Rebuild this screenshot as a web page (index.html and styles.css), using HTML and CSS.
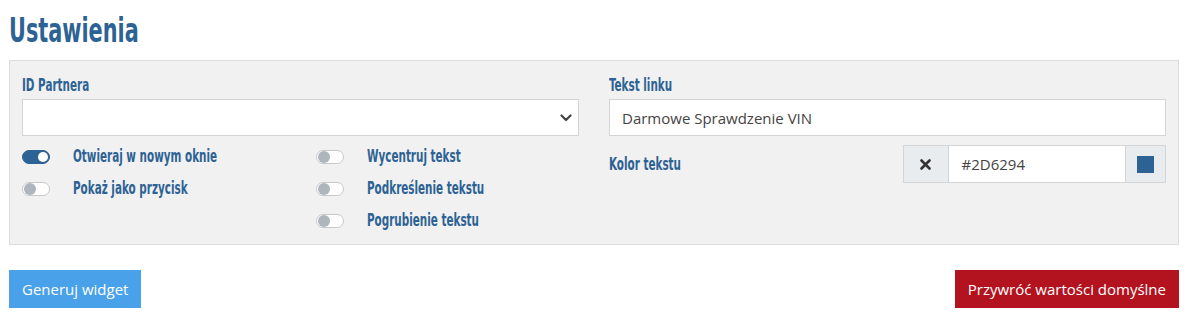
FILE: index.html
```html
<!DOCTYPE html>
<html lang="pl">
<head>
    <meta charset="UTF-8">
    <meta name="viewport" content="width=device-width, initial-scale=1.0">
    <title>Ustawienia widgetu</title>
    <link rel="stylesheet" href="styles.css">
</head>
<body>

<div class="page">
    <h1 class="title"><span class="narrow">Ustawienia</span></h1>

    <!-- Panel ustawien -->
    <div class="panel">
        <div class="col">
            <label class="label"><span class="narrow">ID Partnera</span></label>
            <div class="select">
                <svg class="chevron" width="12" height="8" viewBox="0 0 12 8">
                    <path d="M1.5 1.5 L6 6 L10.5 1.5" fill="none" stroke="#444" stroke-width="2.2" stroke-linecap="round" stroke-linejoin="round"/>
                </svg>
            </div>

            <div class="switches">
                <div class="switch-col">
                    <div class="switch-row">
                        <span class="switch on"></span>
                        <span class="switch-label narrow">Otwieraj w nowym oknie</span>
                    </div>
                    <div class="switch-row">
                        <span class="switch"></span>
                        <span class="switch-label narrow">Pokaż jako przycisk</span>
                    </div>
                </div>
                <div class="switch-col">
                    <div class="switch-row">
                        <span class="switch"></span>
                        <span class="switch-label narrow">Wycentruj tekst</span>
                    </div>
                    <div class="switch-row">
                        <span class="switch"></span>
                        <span class="switch-label narrow">Podkreślenie tekstu</span>
                    </div>
                    <div class="switch-row">
                        <span class="switch"></span>
                        <span class="switch-label narrow">Pogrubienie tekstu</span>
                    </div>
                </div>
            </div>
        </div>

        <div class="col">
            <label class="label"><span class="narrow">Tekst linku</span></label>
            <div class="input">Darmowe Sprawdzenie VIN</div>

            <div class="color-row">
                <span class="label"><span class="narrow">Kolor tekstu</span></span>
                <div class="color-group">
                    <span class="addon">
                        <svg width="11" height="11" viewBox="0 0 11 11">
                            <path d="M1.5 1.5 L9.5 9.5 M9.5 1.5 L1.5 9.5" stroke="#333" stroke-width="2.6" stroke-linecap="round"/>
                        </svg>
                    </span>
                    <span class="color-value">#2D6294</span>
                    <span class="addon swatch-addon"><span class="swatch"></span></span>
                </div>
            </div>
        </div>
    </div>

    <div class="actions">
        <button class="btn btn-blue">Generuj widget</button>
        <button class="btn btn-red">Przywróć wartości domyślne</button>
    </div>
</div>

</body>
</html>
```

FILE: styles.css
```css
/* Basic reset */
body {
    margin: 0;
    padding: 0;
    background-color: #ffffff;
    font-family: "Open Sans", Arial, sans-serif;
    color: #333;
}

.page {
    width: 1170px;
    margin-left: 9px;
}

/* Headings use a narrow bold face */
.title,
.label,
.switch-label {
    font-family: "DejaVu Sans Condensed", "Liberation Sans", Arial, sans-serif;
    font-weight: bold;
    color: #2d6294;
}

/* squeeze the condensed face a bit more */
.narrow {
    display: inline-block;
    white-space: nowrap;
    transform: scaleX(0.68);
    transform-origin: left center;
}

.title {
    font-size: 34px;
    line-height: 36px;
    margin: 12px 0 12px 0;
}

/* Settings panel */
.panel {
    background-color: #f1f1f1;
    border: 1px solid #dcdcdc;
    padding: 14px 12px 7px 12px;
    display: grid;
    grid-template-columns: 1fr 1fr;
    gap: 30px;
}

.col {
    display: flex;
    flex-direction: column;
}

.label {
    display: block;
    font-size: 17px;
    line-height: 20px;
    margin-bottom: 4px;
}

.select,
.input {
    height: 35px;
    background-color: #ffffff;
    border: 1px solid #d4d4d4;
    box-sizing: content-box;
}

.select {
    display: flex;
    align-items: center;
    justify-content: flex-end;
    padding-right: 5px;
}

.chevron {
    margin-right: 1px;
}

.input {
    display: flex;
    align-items: center;
    padding-left: 12px;
    font-size: 15px;
    color: #444;
}

/* Switches */
.switches {
    display: grid;
    grid-template-columns: 1fr 1fr;
    gap: 30px;
    margin-top: 5px;
}

.switch-row {
    height: 32px;
    display: flex;
    align-items: center;
}

.switch {
    position: relative;
    width: 26px;
    height: 12px;
    border: 1px solid #c8c8c8;
    border-radius: 8px;
    background-color: #ffffff;
    margin-right: 23px;
    flex-shrink: 0;
}

.switch::after {
    content: "";
    position: absolute;
    left: 1px;
    top: 0;
    width: 12px;
    height: 12px;
    border-radius: 50%;
    background-color: #adb5bd;
}

.switch.on {
    background-color: #2d6294;
    border-color: #2d6294;
}

.switch.on::after {
    left: auto;
    right: 1px;
    top: 1px;
    width: 10px;
    height: 10px;
    background-color: #ffffff;
}

.switch-label {
    font-size: 17px;
    line-height: 20px;
    margin-top: -3px;
}

/* Color picker */
.color-row {
    display: grid;
    grid-template-columns: 1fr 1fr;
    gap: 30px;
    align-items: center;
    margin-top: 9px;
}

.color-row .label {
    margin-bottom: 0;
}

.color-group {
    display: flex;
    height: 38px;
}

.addon {
    width: 46px;
    display: flex;
    align-items: center;
    justify-content: center;
    background-color: #e9ecef;
    border: 1px solid #d4d4d4;
    box-sizing: border-box;
}

.swatch-addon {
    width: 41px;
}

.swatch {
    width: 17px;
    height: 17px;
    background-color: #2d6294;
}

.color-value {
    flex: 1;
    display: flex;
    align-items: center;
    padding-left: 13px;
    background-color: #ffffff;
    border-top: 1px solid #d4d4d4;
    border-bottom: 1px solid #d4d4d4;
    font-size: 15px;
    color: #444;
}

/* Buttons */
.actions {
    display: flex;
    justify-content: space-between;
    margin-top: 25px;
}

.btn {
    font-family: "Open Sans", Arial, sans-serif;
    font-size: 15px;
    height: 38px;
    padding: 0 13px;
    border: none;
    color: #ffffff;
}

.btn-blue {
    background-color: #48a1e9;
}

.btn-red {
    background-color: #b3131f;
}
```
